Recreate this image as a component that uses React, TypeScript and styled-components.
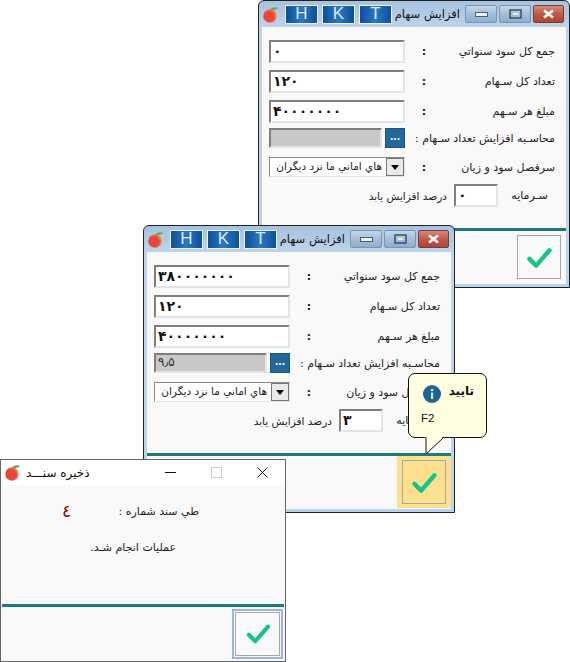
import React from 'react';
import styled, { createGlobalStyle } from 'styled-components';

const FONT = `"DejaVu Sans", "Liberation Sans", sans-serif`;

const GlobalStyle = createGlobalStyle`
  html, body { margin: 0; padding: 0; background: #fff; }
  body { width: 570px; height: 662px; overflow: hidden; font-family: ${FONT}; }
`;

const Desktop = styled.div`
  position: relative;
  width: 570px;
  height: 662px;
  overflow: hidden;
`;

const AeroFrame = styled.section<{ $x: number; $y: number; $z: number }>`
  position: absolute;
  left: ${(p) => p.$x}px;
  top: ${(p) => p.$y}px;
  z-index: ${(p) => p.$z};
  box-sizing: border-box;
  width: 312px;
  height: 288px;
  display: flex;
  flex-direction: column;
  padding: 0 3px 3px;
  border: 1px solid #222;
  border-radius: 6px 6px 0 0;
  background: linear-gradient(#a6c2de, #c0d6ec 30px, #b9d3ec);
`;

const AeroTitle = styled.header`
  flex: none;
  height: 26px;
  display: flex;
  align-items: center;
  padding: 0 2px 0 0;
`;

const LetterButton = styled.button`
  box-sizing: border-box;
  width: 33px;
  height: 19px;
  margin-left: 4px;
  padding: 0;
  border: 1px solid #eef5fb;
  background: linear-gradient(90deg, #0f4f98, #2a78c4 50%, #0f4f98);
  color: #dcebf8;
  font: 17px/16px "Liberation Sans", sans-serif;
  &:first-of-type {
    margin-left: 6px;
  }
`;

const AeroCaption = styled.span`
  margin-left: auto;
  margin-right: 3px;
  color: #111;
  font-size: 11.5px;
  white-space: nowrap;
`;

const CaptionButton = styled.div<{ $close?: boolean }>`
  box-sizing: border-box;
  width: ${(p) => (p.$close ? 31 : 32)}px;
  height: 18px;
  margin-left: 2px;
  display: flex;
  align-items: center;
  justify-content: center;
  border: 1px solid ${(p) => (p.$close ? '#7a3a3a' : '#7d94ad')};
  border-radius: 2px;
  background: ${(p) =>
    p.$close
      ? 'linear-gradient(#d58a7c, #c25a48 50%, #b04432)'
      : 'linear-gradient(#c4d6e8, #a5bfd9 50%, #8fadcb)'};
`;

const FormBody = styled.div`
  flex: 1;
  display: flex;
  flex-direction: column;
  background: #f9f9f9;
`;

const FormRows = styled.div`
  flex: 1;
  padding: 13px 11px 0 7px;
`;

const Row = styled.div<{ $gap: number; $h?: number }>`
  display: grid;
  grid-template-columns: 136px 38px 1fr;
  align-items: center;
  height: ${(p) => p.$h ?? 23}px;
  margin-bottom: ${(p) => p.$gap}px;
`;

const Sunken = styled.input<{ $w?: number }>`
  box-sizing: border-box;
  width: ${(p) => p.$w ?? 136}px;
  height: 23px;
  margin: 0;
  padding: 0 0 2px 2px;
  border-style: solid;
  border-width: 2px;
  border-color: #7f7f7f #e4e4e4 #e4e4e4 #7f7f7f;
  background: #fff;
  color: #111;
  font: bold 14px ${FONT};
  letter-spacing: 1.5px;
  direction: ltr;
  outline: none;
`;

const Colon = styled.span`
  text-align: center;
  font-size: 11px;
  font-weight: bold;
  color: #222;
`;

const Label = styled.span<{ $wide?: boolean }>`
  grid-column: ${(p) => (p.$wide ? '2 / 4' : 'auto')};
  text-align: right;
  direction: rtl;
  color: #222;
  font-size: 11px;
  white-space: nowrap;
`;

const PickerField = styled.div`
  display: flex;
  justify-content: space-between;
  align-items: center;
  height: 20px;
`;

const GrayValue = styled.div`
  box-sizing: border-box;
  width: 113px;
  height: 20px;
  padding-left: 2px;
  border-style: solid;
  border-width: 2px;
  border-color: #7f7f7f #e4e4e4 #e4e4e4 #7f7f7f;
  background: #c8c8c8;
  color: #333;
  font-size: 12px;
  line-height: 15px;
`;

const DotsButton = styled.button`
  box-sizing: border-box;
  width: 20px;
  height: 20px;
  padding: 0 0 5px;
  border: 1px solid #1b5580;
  background: #22689c;
  color: #fff;
  font: bold 12px/12px "Liberation Sans", sans-serif;
`;

const ComboBox = styled.div`
  box-sizing: border-box;
  width: 136px;
  height: 20px;
  display: flex;
  border-style: solid;
  border-width: 1px;
  border-color: #8a8a8a #e4e4e4 #e4e4e4 #8a8a8a;
  background: #fff;
`;

const ComboText = styled.span`
  flex: 1;
  overflow: hidden;
  direction: rtl;
  padding-right: 4px;
  color: #222;
  font-size: 10.5px;
  line-height: 17px;
  white-space: nowrap;
`;

const ComboArrow = styled.span`
  flex: none;
  width: 16px;
  display: flex;
  align-items: center;
  justify-content: center;
  border: 1px solid #777;
  background: #e9e9e9;
  &::after {
    content: '';
    border-style: solid;
    border-width: 5px 4px 0;
    border-color: #000 transparent transparent;
  }
`;

const PercentRow = styled.div`
  display: flex;
  align-items: center;
  justify-content: flex-end;
  height: 23px;
`;

const PercentText = styled.span`
  direction: rtl;
  margin-right: 7px;
  color: #222;
  font-size: 10.5px;
  white-space: nowrap;
`;

const CapitalLabel = styled.span`
  width: 50px;
  margin-right: 7px;
  text-align: right;
  direction: rtl;
  color: #222;
  font-size: 11px;
`;

const TealBar = styled.div`
  flex: none;
  height: 3px;
  background: #1a7a7c;
`;

const FormFooter = styled.footer`
  flex: none;
  height: 53px;
  display: flex;
  justify-content: flex-end;
`;

const ConfirmSlot = styled.div<{ $hot?: boolean }>`
  width: 54px;
  height: 52px;
  display: flex;
  align-items: center;
  justify-content: center;
  background: ${(p) => (p.$hot ? '#fde08e' : 'transparent')};
`;

const ConfirmButton = styled.button`
  box-sizing: border-box;
  width: 44px;
  height: 44px;
  padding: 0;
  display: flex;
  align-items: center;
  justify-content: center;
  border: 1px solid #a8a8a8;
  background: transparent;
`;

const Hint = styled.aside`
  position: absolute;
  left: 264px;
  top: 147px;
  z-index: 3;
  box-sizing: border-box;
  width: 79px;
  height: 65px;
  border: 1px solid #111;
  border-radius: 7px;
  background: #ffffe1;
`;

const HintHead = styled.div`
  display: flex;
  justify-content: space-between;
  padding: 10px 12px 0 14px;
`;

const HintTitle = styled.strong`
  font-size: 12px;
  color: #111;
`;

const HintKey = styled.div`
  margin: 9px 0 0 12px;
  font: 11.5px "Liberation Sans", sans-serif;
  color: #111;
`;

const HintTail = styled.svg`
  position: absolute;
  left: 16px;
  top: 62px;
`;

const PlainFrame = styled.section`
  position: absolute;
  left: 0;
  top: 459px;
  z-index: 4;
  box-sizing: border-box;
  width: 286px;
  height: 203px;
  display: flex;
  flex-direction: column;
  border: 1px solid #666;
  background: #f9f9f9;
`;

const PlainTitle = styled.header`
  flex: none;
  height: 25px;
  display: flex;
  align-items: center;
  padding-left: 3px;
  background: #fff;
`;

const PlainCaption = styled.span`
  margin-left: 5px;
  direction: rtl;
  color: #111;
  font-size: 12px;
  white-space: nowrap;
`;

const PlainControls = styled.div`
  margin-left: auto;
  display: flex;
`;

const PlainControl = styled.span`
  width: 46px;
  height: 25px;
  display: flex;
  align-items: center;
  justify-content: center;
`;

const Message = styled.div`
  flex: 1;
  padding-top: 18px;
`;

const VoucherLine = styled.div`
  display: flex;
  justify-content: space-between;
  align-items: center;
  height: 16px;
  padding: 0 86px 0 61px;
  margin-bottom: 22px;
`;

const VoucherNumber = styled.span`
  color: #8b0000;
  font-size: 17px;
`;

const MessageText = styled.div<{ $right: number }>`
  direction: rtl;
  height: 16px;
  padding-right: ${(p) => p.$right}px;
  color: #222;
  font-size: 11px;
`;

const PlainBar = styled(TealBar)`
  margin: 0 1px;
`;

const PlainFooter = styled.footer`
  flex: none;
  height: 54px;
  display: flex;
  justify-content: flex-end;
  align-items: center;
  padding-right: 2px;
`;

const FocusButton = styled.button`
  box-sizing: border-box;
  width: 51px;
  height: 50px;
  padding: 0 0 3px;
  display: flex;
  align-items: center;
  justify-content: center;
  border: 2px solid #9db4e0;
  outline: 1px solid #a8a8a8;
  outline-offset: -4px;
  background: transparent;
`;

function Apple() {
  return (
    <svg width="17" height="17" viewBox="0 0 17 17" style={{ flex: 'none' }}>
      <defs>
        <radialGradient id="appleFill" cx="0.4" cy="0.55" r="0.65">
          <stop offset="0.55" stopColor="#e8463a" />
          <stop offset="1" stopColor="#f0a060" />
        </radialGradient>
      </defs>
      <circle cx="8" cy="10" r="6.8" fill="url(#appleFill)" />
      <path d="M8 3.5C10 1 13 .8 16 2c-2 2.2-5 2.8-8 1.5z" fill="#6aa84f" />
    </svg>
  );
}

function Check({ size = 44 }: { size?: number }) {
  return (
    <svg width={size} height={size} viewBox="0 0 44 44">
      <path
        d="M12 24l7 7 14-16"
        fill="none"
        stroke="#17c488"
        strokeWidth="4.6"
        strokeLinecap="round"
        strokeLinejoin="round"
      />
    </svg>
  );
}

function TitleBar() {
  return (
    <AeroTitle>
      <Apple />
      <LetterButton>H</LetterButton>
      <LetterButton>K</LetterButton>
      <LetterButton>T</LetterButton>
      <AeroCaption>افزایش سهام</AeroCaption>
      <CaptionButton>
        <svg width="13" height="5">
          <rect x=".5" y=".5" width="12" height="4" fill="#f2f6fa" stroke="#4a5d70" />
        </svg>
      </CaptionButton>
      <CaptionButton>
        <svg width="13" height="10">
          <rect x="1" y="1" width="11" height="8" fill="none" stroke="#3e5064" strokeWidth="1.5" />
          <rect x="4" y="4" width="5" height="2" fill="#eef3f8" />
        </svg>
      </CaptionButton>
      <CaptionButton $close>
        <svg width="13" height="10">
          <path d="M2 1.5l9 7M11 1.5l-9 7" stroke="#fff" strokeWidth="2.6" />
        </svg>
      </CaptionButton>
    </AeroTitle>
  );
}

interface ShareFormProps {
  x: number;
  y: number;
  z: number;
  total: string;
  ratio: string;
  percent: string;
  hot?: boolean;
  children?: React.ReactNode;
}

function ShareForm({ x, y, z, total, ratio, percent, hot, children }: ShareFormProps) {
  return (
    <AeroFrame $x={x} $y={y} $z={z}>
      <TitleBar />
      <FormBody>
        <FormRows>
          <Row $gap={7}>
            <Sunken readOnly value={total} />
            <Colon>:</Colon>
            <Label>جمع کل سود سنواتي</Label>
          </Row>
          <Row $gap={7}>
            <Sunken readOnly value="۱۲۰" />
            <Colon>:</Colon>
            <Label>تعداد کل سـهام</Label>
          </Row>
          <Row $gap={5}>
            <Sunken readOnly value="۴۰۰۰۰۰۰۰" />
            <Colon>:</Colon>
            <Label>مبلغ هر سـهم</Label>
          </Row>
          <Row $gap={9} $h={20}>
            <PickerField>
              <GrayValue>{ratio}</GrayValue>
              <DotsButton>...</DotsButton>
            </PickerField>
            <Label $wide>محاسـبه افزایش تعداد سـهام :</Label>
          </Row>
          <Row $gap={7} $h={20}>
            <ComboBox>
              <ComboText>هاي اماني ما نزد ديگران</ComboText>
              <ComboArrow />
            </ComboBox>
            <Colon>:</Colon>
            <Label>سرفصل سود و زیان</Label>
          </Row>
          <PercentRow>
            <PercentText>درصد افزایش یابد</PercentText>
            <Sunken readOnly value={percent} $w={44} />
            <CapitalLabel>سـرمایه</CapitalLabel>
          </PercentRow>
        </FormRows>
        <TealBar />
        <FormFooter>
          <ConfirmSlot $hot={hot}>
            <ConfirmButton>
              <Check size={42} />
            </ConfirmButton>
          </ConfirmSlot>
        </FormFooter>
      </FormBody>
      {children}
    </AeroFrame>
  );
}

export default function App() {
  return (
    <Desktop>
      <GlobalStyle />
      <ShareForm x={258} y={0} z={1} total="۰" ratio="" percent="۰" />
      <ShareForm x={143} y={225} z={2} total="۳۸۰۰۰۰۰۰۰" ratio="۹٫۵" percent="۳" hot>
        <Hint>
          <HintHead>
            <svg width="18" height="18" viewBox="0 0 18 18" style={{ marginTop: 1 }}>
              <circle cx="9" cy="9" r="9" fill="#1f6496" />
              <rect x="8" y="7.5" width="2.2" height="6.5" fill="#d8e6f2" />
              <rect x="8" y="4" width="2.2" height="2.2" fill="#d8e6f2" />
            </svg>
            <HintTitle>تایید</HintTitle>
          </HintHead>
          <HintKey>F2</HintKey>
          <HintTail width="20" height="20" viewBox="0 0 20 20">
            <path d="M0 0V18L18 1" fill="#ffffe1" stroke="none" />
            <path d="M1 1V18L18 2" fill="none" stroke="#111" />
          </HintTail>
        </Hint>
      </ShareForm>
      <PlainFrame>
        <PlainTitle>
          <Apple />
          <PlainCaption>ذخیره سنـــد</PlainCaption>
          <PlainControls>
            <PlainControl>
              <svg width="11" height="11"><path d="M0 5.5h11" stroke="#111" /></svg>
            </PlainControl>
            <PlainControl>
              <svg width="11" height="11"><rect x=".5" y=".5" width="10" height="10" fill="none" stroke="#ccc" /></svg>
            </PlainControl>
            <PlainControl>
              <svg width="11" height="11"><path d="M.5.5l10 10M10.5.5l-10 10" stroke="#111" /></svg>
            </PlainControl>
          </PlainControls>
        </PlainTitle>
        <Message>
          <VoucherLine>
            <VoucherNumber>٤</VoucherNumber>
            <Label>طي سند شماره :</Label>
          </VoucherLine>
          <MessageText $right={109}>عملیات انجام شـد.</MessageText>
        </Message>
        <PlainBar />
        <PlainFooter>
          <FocusButton>
            <Check size={40} />
          </FocusButton>
        </PlainFooter>
      </PlainFrame>
    </Desktop>
  );
}
